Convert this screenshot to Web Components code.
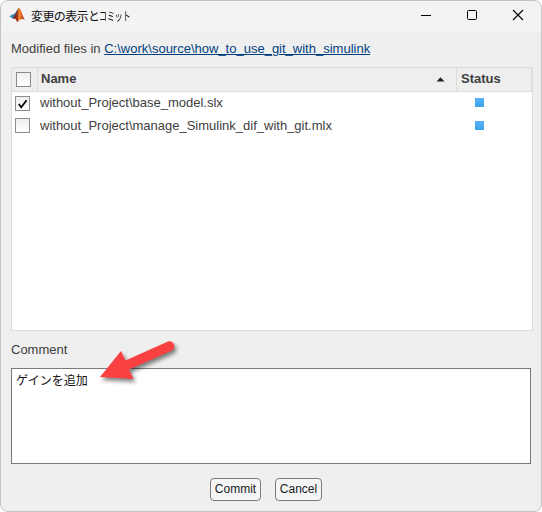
<!DOCTYPE html>
<html lang="ja">
<head>
<meta charset="utf-8">
<title>変更の表示とコミット</title>
<style>
html, body { margin: 0; height: 512px; background: #fff; overflow: hidden; }
</style>
</head>
<body>
<commit-window></commit-window>
<script>
class WindowTitle extends HTMLElement {
  constructor() {
    super();
    this.attachShadow({ mode: 'open' }).innerHTML = `
<style>
:host { display: flex; height: 30px; background: #f3f3f3; align-items: center; padding-left: 8px; box-sizing: border-box; }
.logo { width: 16px; height: 16px; margin-right: 6px; position: relative; top: -1px; }
.title { flex: 1; font: 12px/16px "Noto Sans CJK JP", sans-serif; padding-bottom: 1px; color: #111; white-space: nowrap; letter-spacing: -.6px; }
::slotted(span) { display: inline-block; letter-spacing: 0; transform: scaleX(.66); transform-origin: 0 50%; }
.controls { display: flex; width: 138px; }
.controls svg { width: 46px; height: 30px; fill: none; stroke: #000; }
</style>
<svg class="logo" viewBox="0 0 16 16">
  <defs>
    <linearGradient id="b"><stop offset="0" stop-color="#4ba0d0"/><stop offset="1" stop-color="#28456b"/></linearGradient>
    <linearGradient id="o"><stop offset="0" stop-color="#651b1e"/><stop offset=".38" stop-color="#a52f18"/><stop offset=".55" stop-color="#f79433"/><stop offset=".72" stop-color="#e35718"/><stop offset="1" stop-color="#8d2818"/></linearGradient>
  </defs>
  <path d="M0 9.200 5 7 C7 6.300 8 2 10 1 L9 8 4.500 12Z" fill="url(#b)"/>
  <path d="M3.500 11.200 C7 9.500 8 2.200 10.200 1 C12 1.200 13 8.500 16 13 C13 10.800 11.200 12 8 15.200 C7.500 12 6 11 3.500 11.200Z" fill="url(#o)"/>
</svg>
<div class="title"><slot></slot></div>
<div class="controls">
  <svg viewBox="0 0 46 30"><path d="M18 14.5h10"/></svg>
  <svg viewBox="0 0 46 30"><rect x="18.5" y="9.5" width="9" height="9" rx="1"/></svg>
  <svg viewBox="0 0 46 30"><path d="M18 9l10 10M28 9 18 19" stroke-width="1.1"/></svg>
</div>`;
  }
}
customElements.define('window-title', WindowTitle);

class CheckBox extends HTMLElement {
  constructor() {
    super();
    const mark = this.hasAttribute('checked') ? '<path d="M2.8 7 5.2 10.2 10.6 3.2" fill="none" stroke="#000" stroke-width="1.8"/>' : '';
    this.attachShadow({ mode: 'open' }).innerHTML = `
<style>
:host { display: block; box-sizing: border-box; width: 15px; height: 15px; border: 1px solid #8c8c8c; background: linear-gradient(#efefef, #fff); }
svg { display: block; width: 13px; height: 13px; }
</style><svg viewBox="0 0 13 13">${mark}</svg>`;
  }
}
customElements.define('check-box', CheckBox);

class FileRow extends HTMLElement {
  constructor() {
    super();
    this.attachShadow({ mode: 'open' }).innerHTML = `
<style>
:host { display: grid; grid-template-columns: 25px 1fr 57px; align-items: start; height: 23px; padding-left: 3px; box-sizing: border-box; font-size: 13px; line-height: 15px; }
check-box { margin-top: 4px; }
:host(:not([checked])) check-box { margin-top: 3px; }
i { width: 9px; height: 9px; margin-top: 6px; background: linear-gradient(#55b3fa, #3fa2e8); }
.name { white-space: nowrap; margin-top: 3px; }
</style>
<check-box ${this.hasAttribute('checked') ? 'checked' : ''}></check-box>
<span class="name"><slot></slot></span><i></i>`;
  }
}
customElements.define('file-row', FileRow);

class FileTable extends HTMLElement {
  constructor() {
    super();
    this.attachShadow({ mode: 'open' }).innerHTML = `
<style>
:host { display: block; box-sizing: border-box; border: 1px solid #dcdcdc; background: #fff; }
header { display: grid; grid-template-columns: 26px 419px 1fr; height: 24px; box-sizing: border-box; background: #eee; border-bottom: 1px solid #dcdcdc; border-right: 1px solid #dcdcdc; font-weight: bold; font-size: 13px; line-height: 15px; }
header > div { display: flex; align-items: center; justify-content: space-between; border-right: 1px solid #dcdcdc; box-sizing: border-box; padding-left: 3px; height: 23px; }
header > div:first-child { padding-left: 4px; }
header > div:last-child { border: 0; padding-left: 4px; }
header span { padding-bottom: 2px; }
header svg { width: 9px; height: 5px; margin-right: 11px; }
</style>
<header>
  <div><check-box></check-box></div>
  <div><span>Name</span><svg viewBox="0 0 9 5"><path d="M.5 4.5 4.5 .3 8.5 4.5Z" fill="#222"/></svg></div>
  <div><span>Status</span></div>
</header>
<slot></slot>`;
  }
}
customElements.define('file-table', FileTable);

class PushButton extends HTMLElement {
  constructor() {
    super();
    this.attachShadow({ mode: 'open' }).innerHTML = `
<style>
:host { display: block; box-sizing: border-box; height: 23px; border: 1px solid #7c7c7c; border-radius: 4px; background: #f5f5f5; color: #1a1a1a; font-size: 12px; line-height: 21px; text-align: center; }
</style><slot></slot>`;
  }
}
customElements.define('push-button', PushButton);

class CommitWindow extends HTMLElement {
  constructor() {
    super();
    this.attachShadow({ mode: 'open' }).innerHTML = `
<style>
:host { display: block; position: relative; box-sizing: border-box; width: 542px; height: 512px; border: 1px solid #c3c3c3; border-radius: 8px; background: #efefef; overflow: hidden; font: 13px/15px "Liberation Sans", Arial, sans-serif; color: #404040; }
main { display: flex; flex-direction: column; padding: 10px 8px 0 10px; }
.path { height: 15px; white-space: nowrap; }
a { color: #004080; text-decoration: underline; }
file-table { height: 264px; margin-top: 11px; }
.label { margin-top: 11px; height: 15px; }
.comment { height: 96px; margin: 11px 2px 0 0; box-sizing: border-box; border: 1px solid #7a7a7a; background: #fff; padding: 2px 4px; color: #111; font: 12px/18px "Noto Sans CJK JP", sans-serif; }
nav { display: flex; gap: 14px; padding: 14px 0 0 199px; }
.arrow { position: absolute; left: 94px; top: 334px; width: 90px; height: 55px; filter: drop-shadow(2px 3px 2px rgba(0,0,0,.5)); }
</style>
<window-title>変更の表示と<span>コミット</span></window-title>
<main>
  <div class="path"><span>Modified files in</span> <a>C:\\work\\source\\how_to_use_git_with_simulink</a></div>
  <file-table>
    <file-row checked>without_Project\\base_model.slx</file-row>
    <file-row>without_Project\\manage_Simulink_dif_with_git.mlx</file-row>
  </file-table>
  <div class="label">Comment</div>
  <div class="comment">ゲインを追加</div>
  <nav><push-button style="width:51px">Commit</push-button><push-button style="width:47px">Cancel</push-button></nav>
</main>
<svg class="arrow" viewBox="95 335 90 55"><path d="M100 377 121 351 125.500 360.500 168 341.500A5 5 0 0 1 172 350.500L129 369.500 133.500 379Z" fill="#fa4141"/></svg>`;
  }
}
customElements.define('commit-window', CommitWindow);
</script>
</body>
</html>
